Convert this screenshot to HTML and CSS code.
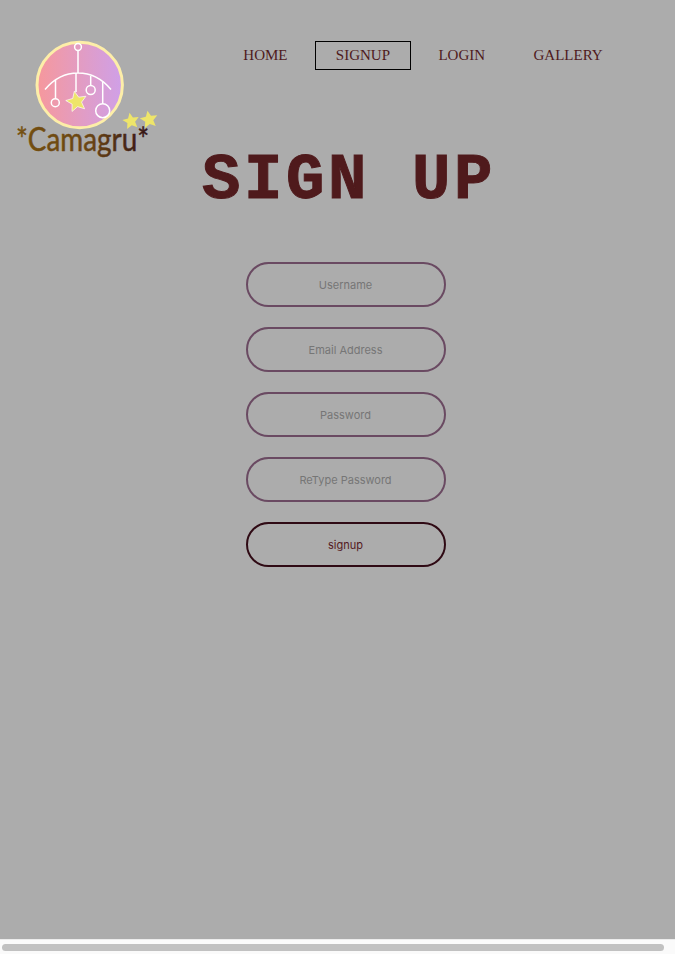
FILE: index.html
```html
<!DOCTYPE html>
<html lang="en">
<head>
  <meta charset="UTF-8">
  <title>Camagru - Sign up</title>
  <link rel="stylesheet" href="styles.css">
</head>
<body>

  <div class="viewport">
    <div class="page">
      <header>
        <svg class="logo" viewBox="16 40 142 120" width="142" height="120">
          <defs>
            <linearGradient id="disc">
              <stop offset="0" stop-color="#f6989c"/>
              <stop offset="1" stop-color="#cfa0e8"/>
            </linearGradient>
            <linearGradient id="word">
              <stop offset="0" stop-color="#75500f"/>
              <stop offset="0.55" stop-color="#6a4514"/>
              <stop offset="1" stop-color="#341414"/>
            </linearGradient>
            <polygon id="star" points="0,-10 2.9,-3.6 9.8,-3 4.6,1.6 6.100,8.400 0,5 -6.100,8.400 -4.600,1.600 -9.800,-3 -2.900,-3.600"/>
          </defs>
          <circle cx="79.700" cy="85" r="42.700" fill="url(#disc)" stroke="#fdeea8" stroke-width="3"/>
          <g fill="none" stroke="#fff" stroke-width="1.500">
            <circle cx="78" cy="47" r="3.400"/>
            <path d="M78 50.500V73M45 89.500C55 77.500 67 73 78 73S101 77.500 111 89.500"/>
            <path d="M55.500 80V98.500M76 73V92M90.700 76V85.500M102.700 81V104"/>
            <circle cx="55.300" cy="102.700" r="4"/>
            <circle cx="90.700" cy="90" r="4.500"/>
            <circle cx="102.700" cy="110.700" r="7"/>
          </g>
          <use href="#star" transform="translate(76.500 101.500) rotate(-12) scale(1.050)" fill="#eee56a" stroke="#fff" stroke-width="0.600"/>
          <use href="#star" transform="translate(131 121) rotate(-10) scale(0.850)" fill="#eee56a"/>
          <use href="#star" transform="translate(149 119.500) rotate(-10) scale(0.900)" fill="#eee56a"/>
          <text class="logo-word" x="16" y="151" textLength="133" lengthAdjust="spacingAndGlyphs" fill="url(#word)" stroke="url(#word)">*Camagru*</text>
        </svg>
        <nav>
          <a href="#">HOME</a>
          <a href="#" class="active">SIGNUP</a>
          <a href="#">LOGIN</a>
          <a href="#">GALLERY</a>
        </nav>
      </header>

      <h1>SIGN UP</h1>

      <form class="signup-form">
        <input type="text" placeholder="Username">
        <input type="text" placeholder="Email Address">
        <input type="password" placeholder="Password">
        <input type="password" placeholder="ReType Password">
        <button type="button">signup</button>
      </form>
    </div>
  </div>

  <div class="scrollbar">
    <div class="thumb"></div>
  </div>

</body>
</html>
```

FILE: styles.css
```css
html, body {
  height: 100%;
}

body {
  margin: 0;
  display: flex;
  flex-direction: column;
  overflow: hidden;
  background-color: #acacac;
  font-family: "Liberation Serif", serif;
}

.viewport {
  flex: 1;
  overflow: hidden;
}

.page {
  width: 691px;
}

header {
  display: flex;
  height: 101px;
  padding: 40px 0 0 16px;
}

.logo {
  display: block;
  flex: none;
  overflow: visible;
}

.logo-word {
  font-family: "Lato", sans-serif;
  font-size: 33px;
  stroke-width: 0.5px;
}

nav {
  display: flex;
  gap: 6.4px;
  margin: 1px 0 0 64.3px;
  align-self: flex-start;
}

nav a {
  padding: 5px 20px;
  border: 1px solid transparent;
  color: #4f1a1c;
  font-size: 15px;
  line-height: 17px;
  text-decoration: none;
}

nav a.active {
  border-color: #000;
}

h1 {
  margin: 0;
  padding-left: 7px;
  color: #4f1a1c;
  font-family: "Liberation Mono", monospace;
  font-size: 64px;
  line-height: 80px;
  font-weight: bold;
  letter-spacing: 3.6px;
  text-align: center;
  -webkit-text-stroke: 1px #4f1a1c;
}

.signup-form {
  display: flex;
  flex-direction: column;
  align-items: center;
  gap: 20px;
  margin-top: 41px;
}

.signup-form input,
.signup-form button {
  box-sizing: border-box;
  width: 200px;
  height: 45px;
  padding: 0 10px;
  border: 2px solid #6a4a62;
  border-radius: 22.5px;
  background: transparent;
  font-family: "Inter", sans-serif;
  font-size: 11px;
  text-align: center;
  outline: none;
}

.signup-form input::placeholder {
  color: #767676;
  opacity: 1;
}

.signup-form button {
  border-color: #2f0a14;
  color: #541a22;
}

.scrollbar {
  flex: none;
  height: 15px;
  box-sizing: border-box;
  padding: 4px 11px 3px 2px;
  background-color: #fafafa;
  border-top: 1px solid #ececec;
}

.thumb {
  height: 7px;
  border-radius: 4px;
  background-color: #c1c1c1;
}
```
